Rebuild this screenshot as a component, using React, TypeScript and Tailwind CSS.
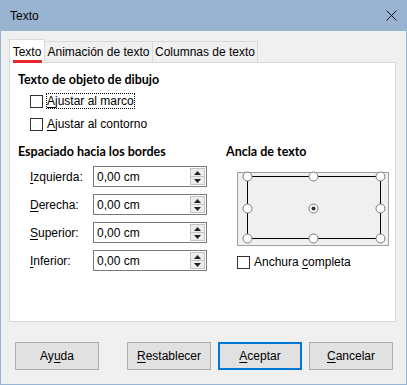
import React from "react";

const FIELDS = [
  { key: "I", rest: "zquierda:" },
  { key: "D", rest: "erecha:" },
  { key: "S", rest: "uperior:" },
  { key: "I", rest: "nferior:" },
];

function Check() {
  return <div className="w-[13px] h-[13px] border border-[#333333] bg-white shrink-0" />;
}

function Arrow({ up }: { up?: boolean }) {
  return (
    <svg width="7" height="4" viewBox="0 0 7 4">
      <polygon points={up ? "0,4 7,4 3.5,0" : "0,0 7,0 3.5,4"} fill="#222" />
    </svg>
  );
}

function SpinField() {
  return (
    <div className="w-[114px] h-[21px] border border-[#7a7a7a] bg-white flex items-center justify-between pl-[3px] pr-[1px]">
      <span>0,00 cm</span>
      <div className="w-[15px] h-[17px] flex flex-col border border-[#c4c4c4] bg-[#ececec]">
        <div className="flex-1 flex items-center justify-center border-b border-[#c4c4c4]">
          <Arrow up />
        </div>
        <div className="flex-1 flex items-center justify-center">
          <Arrow />
        </div>
      </div>
    </div>
  );
}

function Btn({ a, k, b, primary }: { a: string; k: string; b: string; primary?: boolean }) {
  return (
    <div
      className={`w-[84px] h-[28px] bg-[#e1e1e1] flex items-center justify-center ${
        primary ? "border-2 border-[#0078d7]" : "border border-[#adadad]"
      }`}
    >
      <span>
        {a}
        <span className="underline underline-offset-2">{k}</span>
        {b}
      </span>
    </div>
  );
}

export default function App() {
  const pts = [
    [10, 4], [76, 4], [143, 4],
    [10, 36], [143, 36],
    [10, 66], [76, 66], [143, 66],
  ];

  return (
    <div className="w-[407px] h-[385px] bg-[#f0f0f0] border-x border-b border-[#99b4d1] flex flex-col text-[12px] text-black font-['Liberation_Sans',Arial,sans-serif] leading-none">
      {/* Title bar */}
      <div className="h-[31px] -mx-px bg-[#99b4d1] flex items-center justify-between pl-[10px] pr-[10px]">
        <span className="text-[12px]">Texto</span>
        <svg width="11" height="11" viewBox="0 0 11 11">
          <path d="M0.5 0.5 L10.5 10.5 M10.5 0.5 L0.5 10.5" stroke="#111" strokeWidth="1" />
        </svg>
      </div>

      {/* Tabs */}
      <div className="mt-[8px] ml-[8px] h-[23px] flex items-start">
        <div className="relative z-10 w-[36px] h-[24px] bg-white border-t border-x border-[#d9d9d9] flex items-center justify-center">
          <span>Texto</span>
          <div className="absolute left-[3px] top-[20px] w-[29px] h-[3px] bg-[#e8262b]" />
        </div>
        <div className="mt-[2px] w-[108px] h-[21px] border-t border-r border-[#d9d9d9] flex items-center justify-center">
          Animación de texto
        </div>
        <div className="mt-[2px] w-[105px] h-[21px] border-t border-r border-[#d9d9d9] flex items-center justify-center">
          Columnas de texto
        </div>
      </div>

      {/* Panel */}
      <div className="ml-[8px] w-[387px] h-[260px] border border-[#d9d9d9] bg-white pl-[8px] pt-[9px]">
        <div className="h-[16px] flex items-center font-bold font-['Lato',sans-serif] text-[12.5px]">
          Texto de objeto de dibujo
        </div>
        <div className="mt-[3px] h-[20px] flex items-center pl-[12px]">
          <Check />
          <span className="ml-[3px] border border-dotted border-black leading-[14px]">
            <span className="underline underline-offset-2">A</span>justar al marco
          </span>
        </div>
        <div className="mt-[3px] h-[20px] flex items-center pl-[12px]">
          <Check />
          <span className="ml-[4px]">
            <span className="underline underline-offset-2">A</span>justar al contorno
          </span>
        </div>

        <div className="mt-[10px] flex">
          {/* Spacing */}
          <div className="w-[208px] flex flex-col">
            <div className="h-[16px] flex items-center font-bold font-['Lato',sans-serif] text-[12.5px]">
              Espaciado hacia los bordes
            </div>
            <div className="mt-[6px] flex flex-col gap-[7px]">
              {FIELDS.map((f, i) => (
                <div key={i} className="h-[21px] flex items-center">
                  <span className="w-[75px] pl-[12px]">
                    <span className="underline underline-offset-2">{f.key}</span>
                    {f.rest}
                  </span>
                  <SpinField />
                </div>
              ))}
            </div>
          </div>

          {/* Anchor */}
          <div className="flex flex-col">
            <div className="h-[16px] flex items-center font-bold font-['Lato',sans-serif] text-[12.5px]">
              Ancla de texto
            </div>
            <div className="relative mt-[12px] ml-[11px] w-[152px] h-[74px] border border-[#a0a0a0] bg-[#f0f0f0]">
              <svg
                className="absolute -left-px -top-px overflow-visible"
                width="152"
                height="74"
                viewBox="0 0 152 74"
              >
                <rect x="10.5" y="4.5" width="133" height="62" fill="none" stroke="#000" strokeWidth="1" />
                {pts.map(([x, y], i) => (
                  <circle key={i} cx={x + 0.5} cy={y + 0.5} r="4.5" fill="#fff" stroke="#7a7a7a" strokeWidth="1" />
                ))}
                <circle cx="76.5" cy="36.5" r="4.5" fill="#fff" stroke="#7a7a7a" strokeWidth="1" />
                <circle cx="76.5" cy="36.5" r="2" fill="#333" />
              </svg>
            </div>
            <div className="mt-[6px] ml-[11px] h-[20px] flex items-center">
              <Check />
              <span className="ml-[4px]">
                Anchura <span className="underline underline-offset-2">c</span>ompleta
              </span>
            </div>
          </div>
        </div>
      </div>

      {/* Buttons */}
      <div className="mt-[20px] ml-[14px] flex">
        <Btn a="Ay" k="u" b="da" />
        <div className="ml-[28px]">
          <Btn a="" k="R" b="establecer" />
        </div>
        <div className="ml-[7px]">
          <Btn a="" k="A" b="ceptar" primary />
        </div>
        <div className="ml-[7px]">
          <Btn a="" k="C" b="ancelar" />
        </div>
      </div>
    </div>
  );
}
